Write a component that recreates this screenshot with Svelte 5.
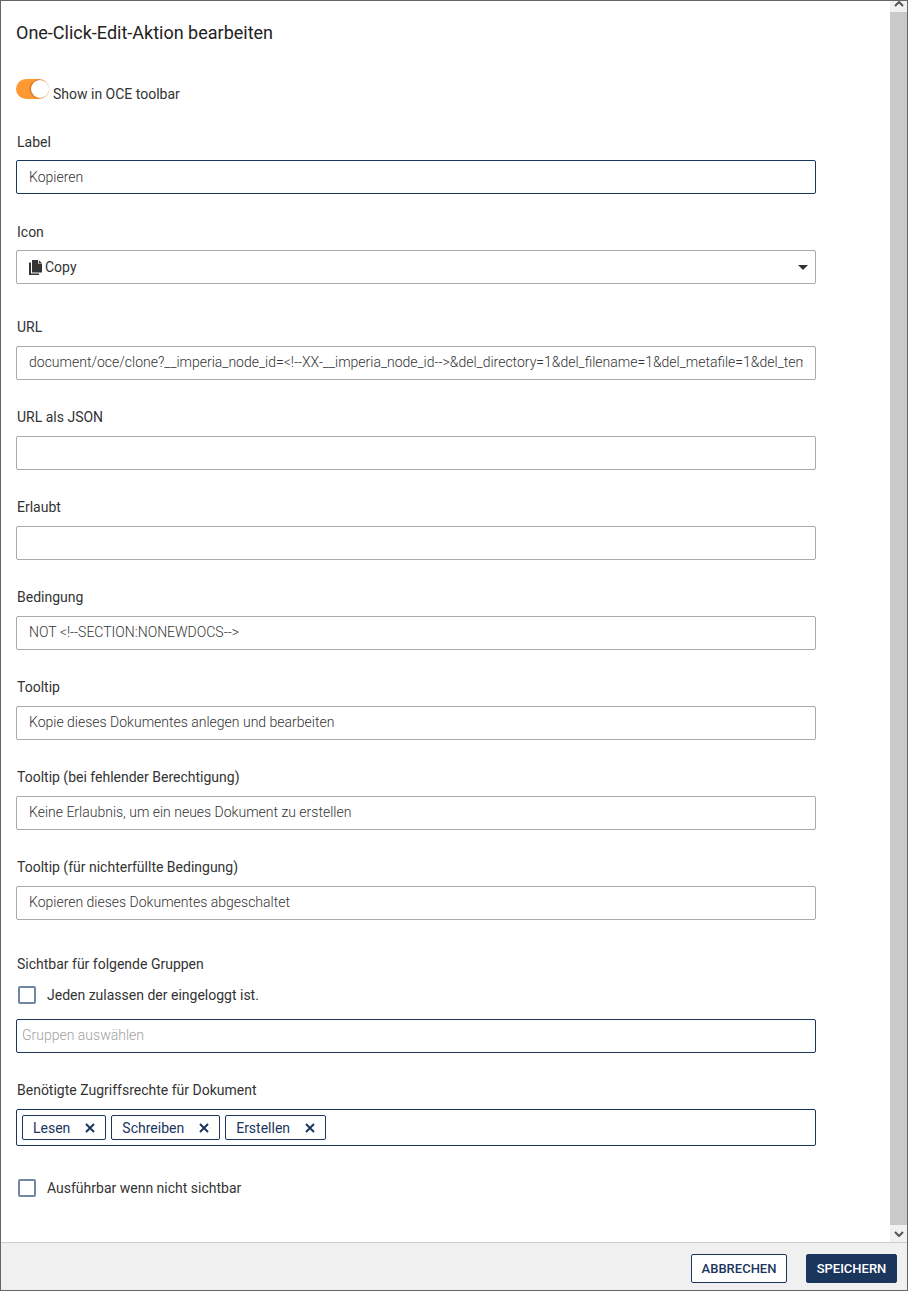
<script lang="ts">
  let showInToolbar = $state(true);
  let allowAll = $state(false);
  let runHidden = $state(false);

  const url = 'document/oce/clone?__imperia_node_id=<!--XX-__imperia_node_id-->&del_directory=1&del_filename=1&del_metafile=1&del_template=1';

  // Felder nach dem Icon-Select, alle gleich aufgebaut
  const fields = [
    { label: 'URL', value: url },
    { label: 'URL als JSON', value: '' },
    { label: 'Erlaubt', value: '' },
    { label: 'Bedingung', value: 'NOT <!--SECTION:NONEWDOCS-->' },
    { label: 'Tooltip', value: 'Kopie dieses Dokumentes anlegen und bearbeiten' },
    { label: 'Tooltip (bei fehlender Berechtigung)', value: 'Keine Erlaubnis, um ein neues Dokument zu erstellen' },
    { label: 'Tooltip (für nichterfüllte Bedingung)', value: 'Kopieren dieses Dokumentes abgeschaltet' },
  ];

  let rights = $state(['Lesen', 'Schreiben', 'Erstellen']);
</script>

<div class="dialog">
  <div class="main">
    <div class="content">
      <h2>One-Click-Edit-Aktion bearbeiten</h2>

      <label class="toggle-row">
        <input class="sr" type="checkbox" bind:checked={showInToolbar} />
        <span class="toggle"><span class="knob"></span></span>
        <span class="toggle-text">Show in OCE toolbar</span>
      </label>

      <div class="field first">
        <label for="f-label">Label</label>
        <input id="f-label" class="input active" type="text" value="Kopieren" />
      </div>

      <div class="field field-select">
        <label for="f-icon">Icon</label>
        <div id="f-icon" class="input select">
          <svg class="copy" viewBox="0 0 13 15" width="13" height="15" aria-hidden="true">
            <path d="M3 0h6v3.6h4V12.6H3z" fill="#333" />
            <path d="M9.8 0.2 12.8 2.9H9.8z" fill="#333" />
            <path d="M0 2.4h2v11h8V15H0z" fill="#333" />
          </svg>
          <span>Copy</span>
          <span class="caret"></span>
        </div>
      </div>

      {#each fields as f (f.label)}
        <div class="field plain">
          <label for={f.label}>{f.label}</label>
          <input id={f.label} class="input" type="text" value={f.value} />
        </div>
      {/each}

      <div class="group">
        <div class="group-label">Sichtbar für folgende Gruppen</div>
        <label class="check">
          <input class="sr" type="checkbox" bind:checked={allowAll} />
          <span class="box"></span>
          <span>Jeden zulassen der eingeloggt ist.</span>
        </label>
        <input class="input active search" type="text" placeholder="Gruppen auswählen" />
      </div>

      <div class="rights">
        <div class="group-label rights-label">Benötigte Zugriffsrechte für Dokument</div>
        <div class="tags">
          {#each rights as r (r)}
            <span class="tag">
              {r}
              <svg viewBox="0 0 10 10" width="10" height="10" aria-hidden="true">
                <path d="M1 1l8 8M9 1l-8 8" stroke="#1a365d" stroke-width="2" fill="none" />
              </svg>
            </span>
          {/each}
        </div>
      </div>

      <label class="check last">
        <input class="sr" type="checkbox" bind:checked={runHidden} />
        <span class="box"></span>
        <span>Ausführbar wenn nicht sichtbar</span>
      </label>
    </div>

    <div class="scrollbar">
      <div class="arrow">
        <svg viewBox="0 0 10 6" width="10" height="6" aria-hidden="true"><path d="M1 5l4-4 4 4" stroke="#555" stroke-width="2" fill="none" /></svg>
      </div>
      <div class="thumb"></div>
      <div class="arrow">
        <svg viewBox="0 0 10 6" width="10" height="6" aria-hidden="true"><path d="M1 1l4 4 4-4" stroke="#555" stroke-width="2" fill="none" /></svg>
      </div>
    </div>
  </div>

  <div class="footer">
    <button type="button" class="btn">ABBRECHEN</button>
    <button type="button" class="btn primary">SPEICHERN</button>
  </div>
</div>

<style>
  :global(body) {
    margin: 0;
    background: #fff;
  }

  .dialog {
    box-sizing: border-box;
    width: 908px;
    height: 1291px;
    border: 1px solid #666;
    display: flex;
    flex-direction: column;
    font-family: Roboto, 'Liberation Sans', sans-serif;
    font-size: 14px;
    color: #333;
    background: #fff;
  }

  .main {
    flex: 1;
    display: flex;
    min-height: 0;
  }

  .content {
    flex: 1;
    min-width: 0;
    padding: 0 73px 0 15px;
  }

  h2 {
    margin: 0;
    padding-top: 21px;
    height: 57px;
    box-sizing: border-box;
    font-size: 18px;
    line-height: 21px;
    font-weight: 400;
    color: #222;
  }

  .sr {
    position: absolute;
    opacity: 0;
    width: 0;
    height: 0;
    margin: 0;
  }

  .toggle-row {
    display: flex;
    align-items: flex-start;
    height: 20px;
    margin-top: 21px;
  }

  .toggle {
    position: relative;
    display: block;
    width: 33px;
    height: 20px;
    border-radius: 10px;
    background: #ff9933;
  }

  .knob {
    position: absolute;
    right: 0;
    top: 1px;
    width: 18px;
    height: 18px;
    border-radius: 50%;
    background: #fff;
    box-shadow: -1px 0 2px rgba(120, 60, 0, 0.5);
  }

  .toggle-text {
    margin-left: 4px;
    margin-top: 7px;
    line-height: 16px;
    white-space: nowrap;
  }

  .field {
    margin-top: 30px;
  }

  .first {
    margin-top: 35px;
  }

  .field label,
  .group-label {
    display: block;
    height: 16px;
    line-height: 16px;
    margin: 0 0 10px 1px;
  }

  .plain {
    margin-top: 29px;
  }

  .plain label {
    margin-bottom: 11px;
  }

  .plain .input {
    padding-bottom: 2px;
  }

  .input {
    display: block;
    box-sizing: border-box;
    width: 800px;
    height: 34px;
    padding: 0 12px;
    border: 1px solid #aaa;
    border-radius: 2px;
    background: #fff;
    font: inherit;
    font-weight: 300;
    color: #333;
    outline: none;
  }

  .active {
    border-color: #1a365d;
  }

  .select {
    display: flex;
    align-items: center;
    gap: 3px;
    position: relative;
    font-weight: 400;
  }

  .copy {
    flex: none;
  }

  .caret {
    position: absolute;
    right: 7px;
    top: 14px;
    width: 0;
    height: 0;
    border-left: 5px solid transparent;
    border-right: 5px solid transparent;
    border-top: 5px solid #333;
  }

  .field-select + .field {
    margin-top: 35px;
  }

  .group {
    margin-top: 36px;
  }

  .group .group-label {
    margin-bottom: 14px;
  }

  .check {
    display: flex;
    align-items: center;
    gap: 11px;
    height: 18px;
    padding-left: 2px;
  }

  .box {
    box-sizing: border-box;
    width: 18px;
    height: 18px;
    border: 2px solid #6f87a5;
    border-radius: 2px;
    background: #fff;
  }

  .search {
    margin-top: 15px;
    padding: 0 5px 2px;
  }

  .search::placeholder {
    color: #a0a0a0;
    opacity: 1;
  }

  .rights {
    margin-top: 29px;
  }

  .rights .rights-label {
    margin-bottom: 11px;
  }

  .tags {
    box-sizing: border-box;
    width: 800px;
    height: 37px;
    border: 1px solid #1a365d;
    border-radius: 2px;
    display: flex;
    align-items: center;
    gap: 5px;
    padding: 0 4px 0 5px;
  }

  .tag {
    box-sizing: border-box;
    display: flex;
    align-items: center;
    justify-content: space-between;
    height: 25px;
    padding: 0 10px;
    border: 1px solid #1a365d;
    border-radius: 2px;
    color: #1a365d;
    gap: 15px;
  }

  .last {
    margin-top: 33px;
  }

  .scrollbar {
    flex: none;
    width: 17px;
    display: flex;
    flex-direction: column;
    background: #f1f1f1;
  }

  .arrow {
    flex: none;
    height: 11px;
    display: flex;
    align-items: center;
    justify-content: center;
    background: #f1f1f1;
  }

  .arrow:first-child {
    align-items: flex-start;
  }

  .arrow:last-child {
    height: 17px;
  }

  .thumb {
    flex: 1;
    background: #c9c9c9;
  }

  .footer {
    flex: none;
    box-sizing: border-box;
    height: 48px;
    border-top: 1px solid #ccc;
    background: #f0f0f0;
    display: flex;
    align-items: flex-start;
    justify-content: flex-end;
    gap: 19px;
    padding: 11px 10px 0 0;
  }

  .btn {
    box-sizing: border-box;
    height: 29px;
    width: 96px;
    padding: 0;
    border: 1px solid #1a365d;
    border-radius: 2px;
    background: #fff;
    color: #1a365d;
    font: 500 13px Roboto, 'Liberation Sans', sans-serif;
    cursor: pointer;
  }

  .primary {
    width: 91px;
    background: #1a365d;
    color: #fff;
  }
</style>
